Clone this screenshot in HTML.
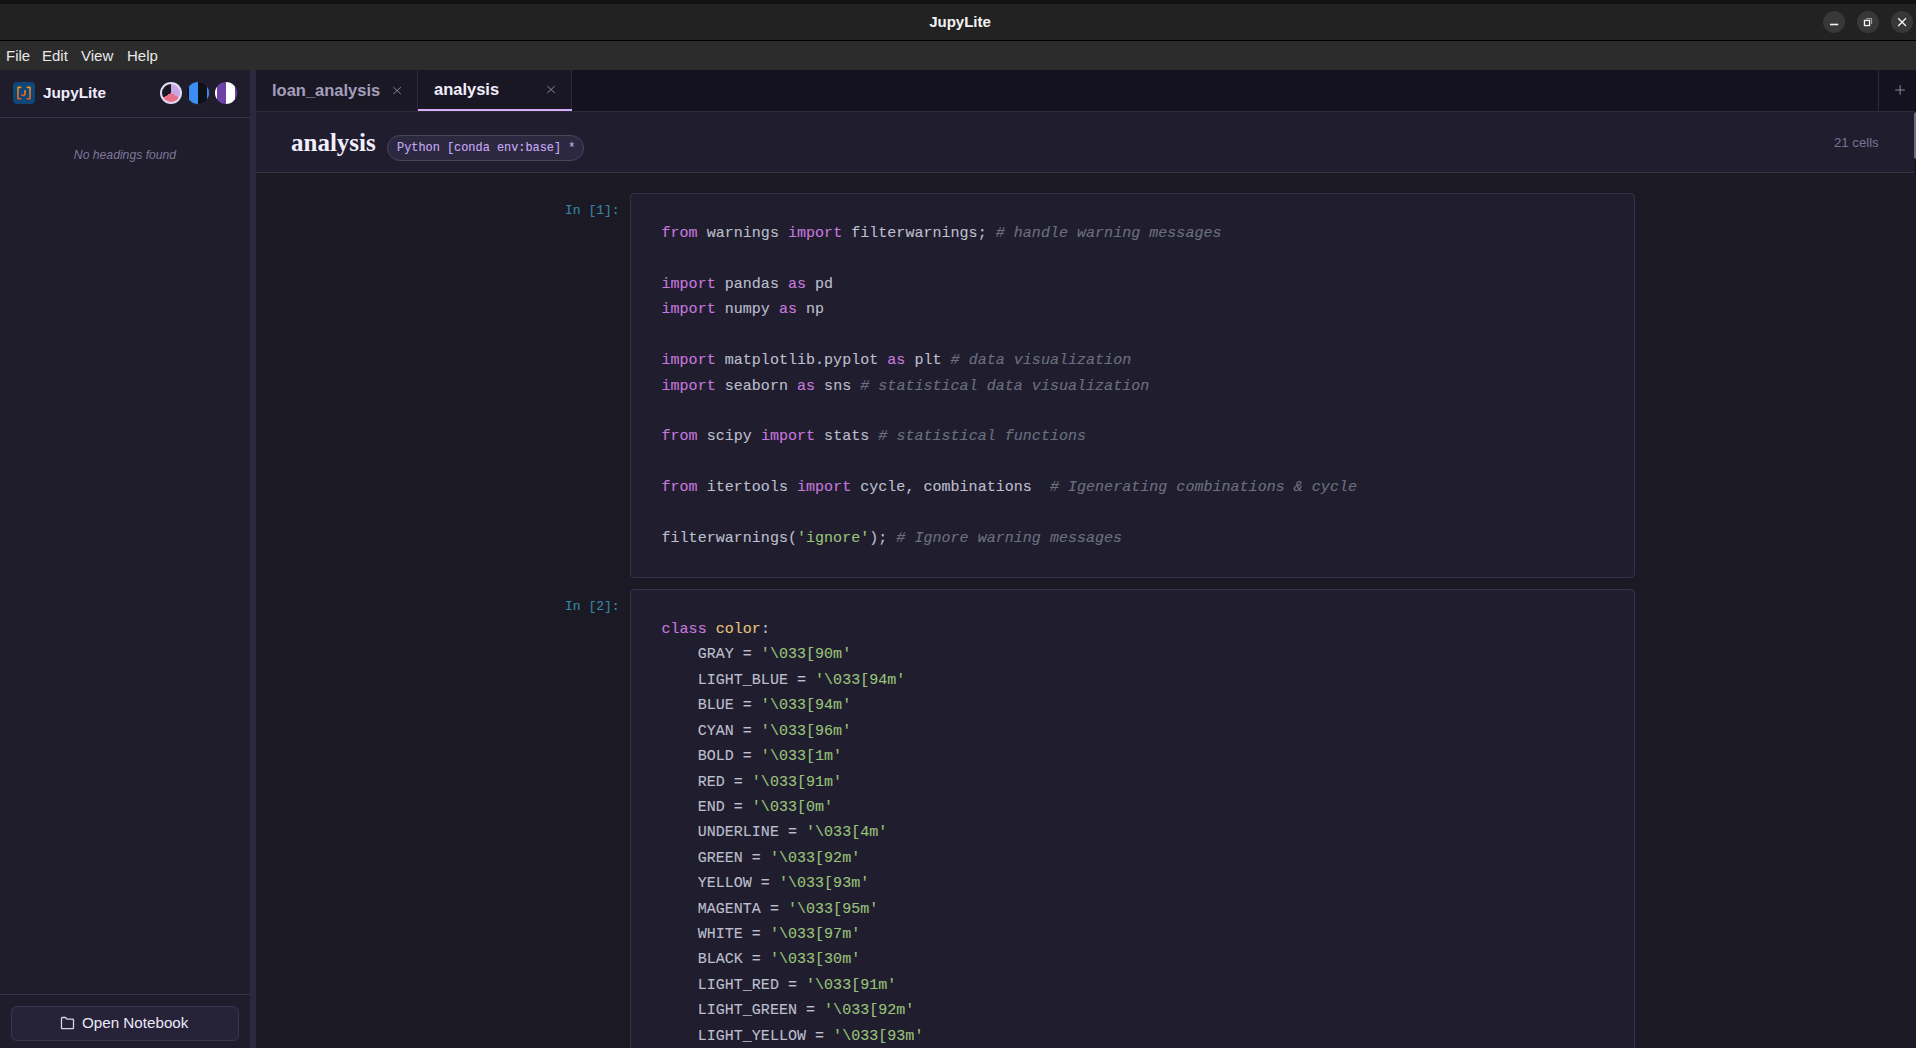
<!DOCTYPE html>
<html><head><meta charset="utf-8">
<style>
*{margin:0;padding:0;box-sizing:border-box}
html,body{width:1916px;height:1048px;overflow:hidden;background:#1b1924;font-family:"Liberation Sans",sans-serif}
.abs{position:absolute}
#tb{left:0;top:0;width:1916px;height:40px;background:#222222}
#tbtop{left:0;top:0;width:1916px;height:4px;background:#131313}
#tbline{left:0;top:40px;width:1916px;height:1px;background:#000}
#title{left:0;top:1px;width:1920px;height:40px;line-height:41px;text-align:center;color:#f2f2f2;font-weight:bold;font-size:15px}
.wbtn{width:22px;height:22px;border-radius:50%;background:#383838;top:11px}
#menu{left:0;top:41px;width:1916px;height:29px;background:#2c2c2c}
.mi{top:41px;height:29px;line-height:29px;color:#e8e8e8;font-size:15px}
#side{left:0;top:70px;width:250px;height:978px;background:#1f1c2c}
#split{left:250px;top:70px;width:6px;height:978px;background:#2c283e}
#tabbar{left:256px;top:70px;width:1660px;height:41px;background:#14121e}
#hdr{left:256px;top:111px;width:1658px;height:62px;background:#201d2e;border-top:1px solid #2e2a3e;border-bottom:1px solid #393548}
.cell{left:630px;width:1005px;background:#201d2e;border:1px solid #35314a;border-radius:4px}
.prompt{font-family:"Liberation Mono",monospace;font-size:13px;color:#3785a3;left:565px;-webkit-text-stroke:0.15px currentColor}
pre{font-family:"Liberation Mono",monospace;font-size:15px;letter-spacing:0.03px;-webkit-text-stroke:0.12px currentColor;line-height:25.42px;color:#bcbfcc;position:absolute;left:661.5px;white-space:pre}
.k{color:#c678dd}.s{color:#98c379}.c{color:#6b7080;font-style:italic}.y{color:#e5c07b}.p{color:#c0c0c8}
</style></head><body>
<div class="abs" id="tb"></div>
<div class="abs" id="tbtop"></div>
<div class="abs" id="tbline"></div>
<div class="abs" id="title">JupyLite</div>
<div class="abs wbtn" style="left:1823px"></div>
<div class="abs wbtn" style="left:1857px"></div>
<div class="abs wbtn" style="left:1891px"></div>
<div class="abs" id="menu"></div>
<div class="abs mi" style="left:6px">File</div>
<div class="abs mi" style="left:42px">Edit</div>
<div class="abs mi" style="left:81px">View</div>
<div class="abs mi" style="left:127px">Help</div>

<div class="abs" id="side"></div>
<div class="abs" id="split"></div>
<div class="abs" id="tabbar"></div>
<div class="abs" id="hdr"></div>

<div class="abs prompt" style="top:203px">In [1]:</div>
<div class="abs cell" style="top:193px;height:385px"></div>
<pre style="top:221px"><span class="k">from</span> warnings <span class="k">import</span> filterwarnings; <span class="c"># handle warning messages</span>

<span class="k">import</span> pandas <span class="k">as</span> pd
<span class="k">import</span> numpy <span class="k">as</span> np

<span class="k">import</span> matplotlib.pyplot <span class="k">as</span> plt <span class="c"># data visualization</span>
<span class="k">import</span> seaborn <span class="k">as</span> sns <span class="c"># statistical data visualization</span>

<span class="k">from</span> scipy <span class="k">import</span> stats <span class="c"># statistical functions</span>

<span class="k">from</span> itertools <span class="k">import</span> cycle, combinations  <span class="c"># Igenerating combinations &amp; cycle</span>

filterwarnings(<span class="s">'ignore'</span>); <span class="c"># Ignore warning messages</span></pre>

<div class="abs prompt" style="top:599px">In [2]:</div>
<div class="abs cell" style="top:589px;height:500px"></div>
<pre style="top:617px"><span class="k">class</span> <span class="y">color</span>:
    GRAY = <span class="s">'\033[90m'</span>
    LIGHT_BLUE = <span class="s">'\033[94m'</span>
    BLUE = <span class="s">'\033[94m'</span>
    CYAN = <span class="s">'\033[96m'</span>
    BOLD = <span class="s">'\033[1m'</span>
    RED = <span class="s">'\033[91m'</span>
    END = <span class="s">'\033[0m'</span>
    UNDERLINE = <span class="s">'\033[4m'</span>
    GREEN = <span class="s">'\033[92m'</span>
    YELLOW = <span class="s">'\033[93m'</span>
    MAGENTA = <span class="s">'\033[95m'</span>
    WHITE = <span class="s">'\033[97m'</span>
    BLACK = <span class="s">'\033[30m'</span>
    LIGHT_RED = <span class="s">'\033[91m'</span>
    LIGHT_GREEN = <span class="s">'\033[92m'</span>
    LIGHT_YELLOW = <span class="s">'\033[93m'</span></pre>

<!-- window buttons icons -->
<svg class="abs" style="left:1816px;top:0px" width="100" height="40" viewBox="1816 0 100 40">
<path d="M1830 24.5 H1838.2" stroke="#f4f4f4" stroke-width="1.6"/>
<path d="M1866.3 18.6 H1871.6 V24" fill="none" stroke="#a8a8a8" stroke-width="1"/>
<rect x="1864.45" y="20.45" width="5.1" height="5.1" fill="none" stroke="#f4f4f4" stroke-width="1.3"/>
<path d="M1898.2 18.3 L1906 26 M1906 18.3 L1898.2 26" stroke="#f4f4f4" stroke-width="1.3"/>
</svg>

<!-- sidebar -->
<div class="abs" style="left:0;top:117px;width:250px;height:1px;background:#383449"></div>
<div class="abs" style="left:13px;top:82px;width:22px;height:22px;border-radius:4px;background:#0f4678"></div>
<svg class="abs" style="left:13px;top:82px" width="22" height="22" viewBox="0 0 22 22">
<defs><linearGradient id="og" x1="0" y1="0" x2="0" y2="1"><stop offset="0" stop-color="#f2921c"/><stop offset="1" stop-color="#e85e1e"/></linearGradient></defs>
<path d="M7.6 5.4 H5.0 V16.7 H7.6 M14.4 5.4 H17.0 V16.7 H14.4" fill="none" stroke="url(#og)" stroke-width="1.6" stroke-linecap="round" stroke-linejoin="round"/>
<path d="M12.0 8.8 V11.8 Q12.0 13.5 10.3 13.5 Q9.3 13.5 8.7 13.0" fill="none" stroke="url(#og)" stroke-width="1.6" stroke-linecap="round"/>
</svg>
<div class="abs" style="left:43px;top:84px;font-size:15.3px;font-weight:bold;color:#f2eefc;line-height:18px">JupyLite</div>
<div class="abs" style="left:160px;top:82px;width:22px;height:22px;border-radius:50%;background:#e0dcf0"></div>
<div class="abs" style="left:162px;top:84px;width:18px;height:18px;border-radius:50%;background:conic-gradient(#c7a6e6 0deg 120deg,#e8708a 120deg 240deg,#1a1726 240deg 360deg)"></div>
<div class="abs" style="left:187px;top:82px;width:22px;height:22px;border-radius:50%;background:linear-gradient(90deg,#0e1117 0 10%,#3a8ef6 10% 50%,#0e1117 50% 90%,#3a8ef6 90% 100%);box-shadow:0 0 0 1px #2a2438"></div>
<div class="abs" style="left:215px;top:82px;width:22px;height:22px;border-radius:50%;background:linear-gradient(90deg,#ffffff 0 10%,#6e40a8 10% 50%,#ffffff 50% 90%,#6e40a8 90% 100%)"></div>
<div class="abs" style="left:0;top:147px;width:250px;text-align:center;font-size:12.2px;font-style:italic;color:#7d7898;line-height:16px">No headings found</div>
<div class="abs" style="left:0;top:994px;width:250px;height:1px;background:#383449"></div>
<div class="abs" style="left:11px;top:1006px;width:228px;height:35px;border-radius:6px;background:#262238;border:1px solid #3a3650"></div>
<svg class="abs" style="left:60px;top:1016px" width="15" height="14" viewBox="0 0 15 14">
<path d="M1.5 2.2 Q1.5 1.5 2.2 1.5 H5.5 L7 3.2 H12.8 Q13.5 3.2 13.5 3.9 V12 Q13.5 12.6 12.8 12.6 H2.2 Q1.5 12.6 1.5 12 Z" fill="none" stroke="#d8d4e4" stroke-width="1.3"/>
</svg>
<div class="abs" style="left:82px;top:1015px;font-size:15.2px;color:#ece8f8;line-height:16px">Open Notebook</div>

<!-- tabs -->
<div class="abs" style="left:256px;top:70px;width:162px;height:41px;background:#1b1826"></div>
<div class="abs" style="left:417px;top:70px;width:1px;height:41px;background:#2e2a3e"></div>
<div class="abs" style="left:418px;top:70px;width:153px;height:41px;background:#1a1725"></div>
<div class="abs" style="left:571px;top:70px;width:1px;height:41px;background:#2e2a3e"></div>
<div class="abs" style="left:418px;top:109px;width:154px;height:2px;background:#d4aef5"></div>
<div class="abs" style="left:272px;top:82px;font-size:16.5px;font-weight:bold;color:#a49fba;line-height:17px">loan_analysis</div>
<svg class="abs" style="left:392px;top:86px" width="10" height="9" viewBox="0 0 10 9"><path d="M1.4 1.2 L8.8 8.0 M8.8 1.2 L1.4 8.0" stroke="#8a85a0" stroke-width="1"/></svg>
<div class="abs" style="left:434px;top:81px;font-size:16.5px;font-weight:bold;color:#f2eefc;line-height:17px">analysis</div>
<svg class="abs" style="left:546px;top:85px" width="10" height="9" viewBox="0 0 10 9"><path d="M1.4 1.2 L8.8 7.9 M8.8 1.2 L1.4 7.9" stroke="#8a85a0" stroke-width="1"/></svg>
<div class="abs" style="left:1878px;top:70px;width:1px;height:41px;background:#2e2a3e"></div>
<svg class="abs" style="left:1894px;top:84px" width="12" height="12" viewBox="0 0 12 12"><path d="M6.1 1.2 V10.8 M1.3 6 H10.9" stroke="#8a85a0" stroke-width="1.05"/></svg>

<!-- header -->
<div class="abs" style="left:291px;top:128px;font-family:'Liberation Serif',serif;font-weight:bold;font-size:25px;color:#f2eefc;line-height:30px">analysis</div>
<div class="abs" style="left:387px;top:135px;width:197px;height:26px;border-radius:13px;background:#2c2840;border:1px solid #4a4560"></div>
<div class="abs" style="left:397px;top:140px;font-family:'Liberation Mono',monospace;font-size:11.9px;color:#c5a8f0;line-height:16px;-webkit-text-stroke:0.15px currentColor">Python [conda env:base] *</div>
<div class="abs" style="left:1834px;top:135px;font-size:13.2px;color:#7a7596;line-height:16px">21 cells</div>
<div class="abs" style="left:1914px;top:112px;width:5px;height:47px;border-radius:3px;background:#6e6a85"></div>
</body></html>
